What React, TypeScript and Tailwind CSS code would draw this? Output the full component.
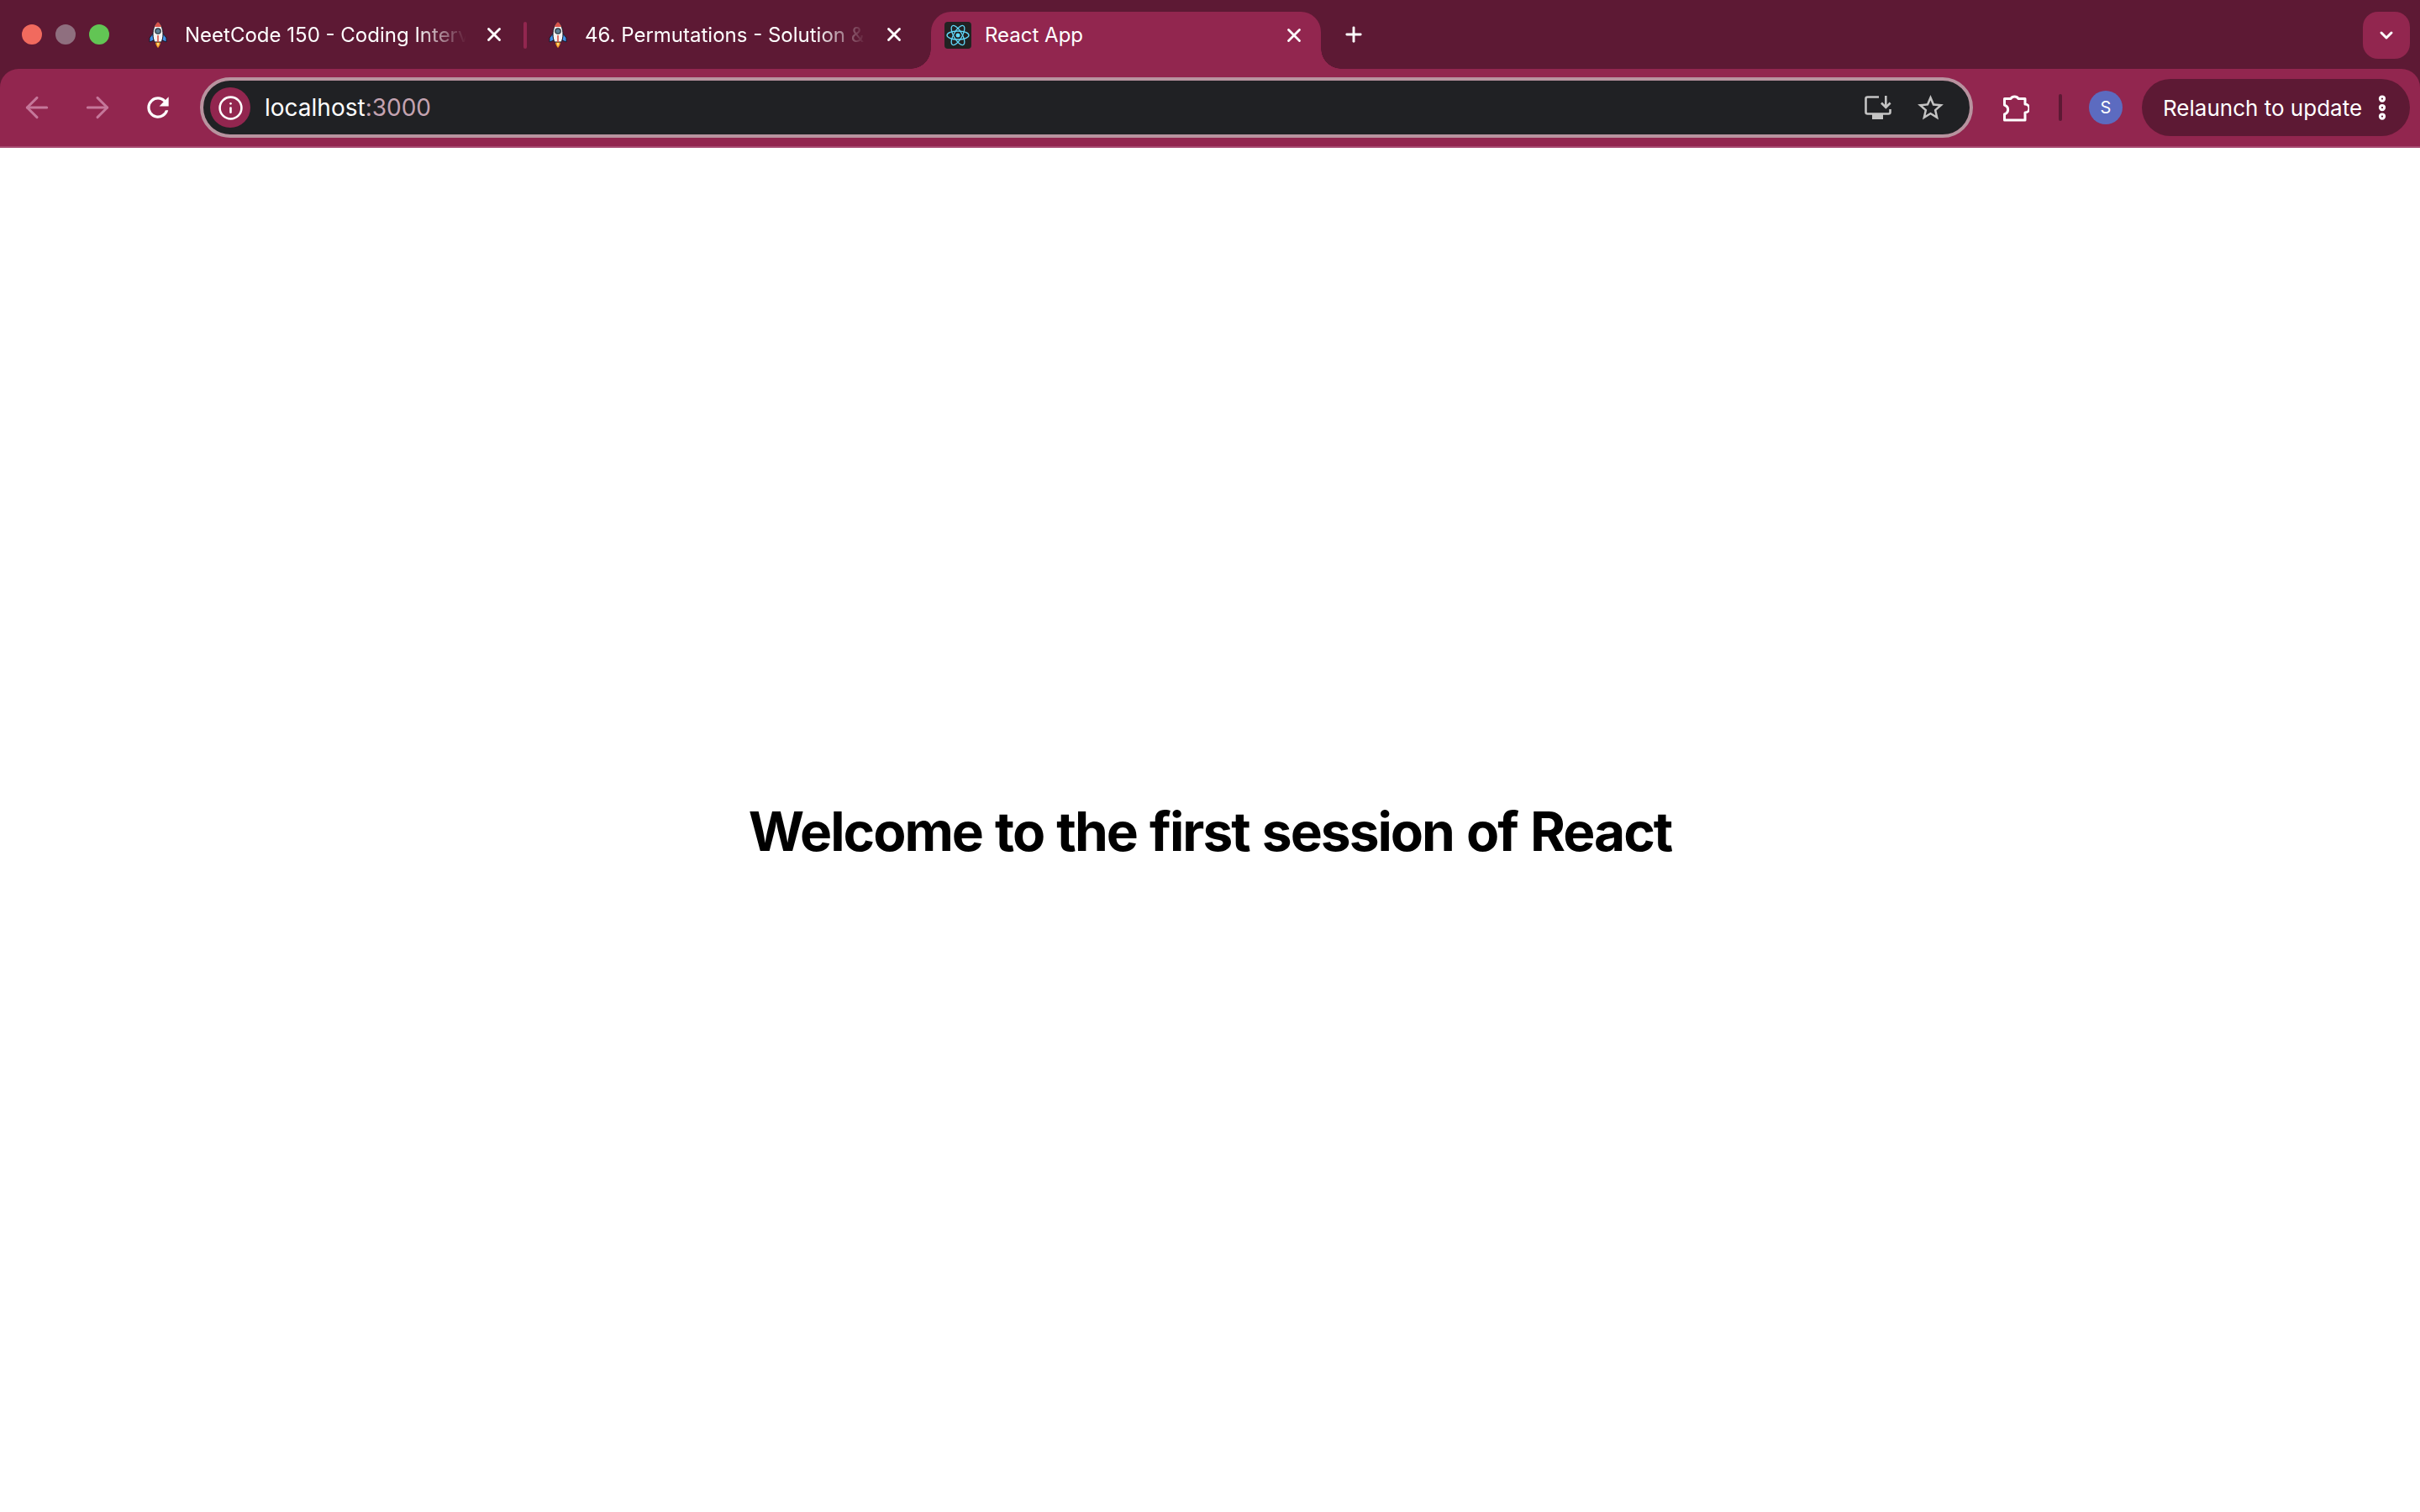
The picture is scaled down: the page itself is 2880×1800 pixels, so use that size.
import { ArrowLeft, ArrowRight, ChevronDown, EllipsisVertical, Info, Plus, X } from "lucide-react";

function RocketIcon() {
  return (
    <svg viewBox="0 0 32 32" className="h-8 w-8 shrink-0">
      <path d="M10 15 L6 20 L6 25 L11 23 Z" fill="#3f8fe8" stroke="#1b1b2a" strokeWidth="1" />
      <path d="M22 15 L26 20 L26 25 L21 23 Z" fill="#3f8fe8" stroke="#1b1b2a" strokeWidth="1" />
      <path d="M13 25 L19 25 C19 28 17 31 16 32 C15 31 13 28 13 25 Z" fill="#f59a23" />
      <path d="M15 26 L17 26 C17 28 16.500 29 16 30 C15.500 29 15 28 15 26 Z" fill="#fde68a" />
      <path d="M16 1 C12 4 10 10 10 16 C10 20 11 23 12 25 L20 25 C21 23 22 20 22 16 C22 10 20 4 16 1 Z" fill="#f4f4f4" stroke="#1b1b2a" strokeWidth="1" />
      <path d="M16 1 C14 2.500 12.800 4.500 11.800 7 L20.200 7 C19.200 4.500 18 2.500 16 1 Z" fill="#d9534a" />
      <circle cx="16" cy="12" r="3.200" fill="#5b7f95" stroke="#26323a" strokeWidth="1.200" />
      <rect x="15.200" y="17" width="1.600" height="8" fill="#d9534a" />
    </svg>
  );
}

function ReactIcon() {
  return (
    <div className="flex h-8 w-8 shrink-0 items-center justify-center rounded-[4px] bg-[#222222]">
      <svg viewBox="-15 -15 30 30" className="h-[30px] w-[30px]" fill="none" stroke="#61dafb" strokeWidth="1.300">
        <ellipse rx="13" ry="5" />
        <ellipse rx="13" ry="5" transform="rotate(60)" />
        <ellipse rx="13" ry="5" transform="rotate(120)" />
        <circle r="2.500" fill="#61dafb" stroke="none" />
      </svg>
    </div>
  );
}

function ReloadIcon() {
  return (
    <svg viewBox="0 0 24 24" className="ml-[33px] h-[38px] w-[38px]" fill="#ffffff">
      <path d="M17.650 6.350A7.950 7.950 0 0 0 12 4a8 8 0 1 0 7.730 10h-2.080A6 6 0 1 1 12 6c1.660 0 3.140.690 4.220 1.780L13 11h7V4l-2.350 2.350z" />
    </svg>
  );
}

function InstallIcon() {
  return (
    <svg viewBox="0 0 32 28" className="h-[28px] w-8" fill="none" stroke="#c4c4c4" strokeWidth="2.600">
      <path d="M17 1.500 H3.500 Q1.500 1.500 1.500 3.500 V19.500 Q1.500 21.500 3.500 21.500 H28.500 Q30.500 21.500 30.500 19.500 V16" />
      <path d="M9 25 H22" strokeWidth="6" />
      <path d="M25.300 0 V14 M20 8.500 L25.300 14 L30.600 8.500" />
    </svg>
  );
}

function StarIcon() {
  return (
    <svg viewBox="0 0 24 24" className="ml-[28px] h-[37px] w-[37px]" fill="#c4c4c4">
      <path d="M22 9.240l-7.190-.620L12 2 9.190 8.630 2 9.240l5.460 4.730L5.820 21 12 17.270 18.180 21l-1.630-7.030L22 9.240zM12 15.400l-3.760 2.270 1-4.280-3.320-2.880 4.380-.380L12 6.100l1.710 4.040 4.380.380-3.320 2.880 1 4.280L12 15.400z" />
    </svg>
  );
}

function ExtensionIcon() {
  return (
    <svg viewBox="0 0 32 33" className="h-[33px] w-8" fill="none" stroke="#ffffff" strokeWidth="3" strokeLinejoin="round">
      <path d="M2.500 5.500 H10 A5 4.500 0 0 1 19 5.500 H27 V12 A5 5 0 0 1 27 22 V31 H2.500 V24 C8 22 8 15 2.500 13 Z" />
    </svg>
  );
}

function InactiveTab({ title, className }: { title: string; className: string }) {
  return (
    <div className={`flex h-[54px] shrink-0 items-center ${className}`}>
      <RocketIcon />
      <span className="ml-[16px] mt-[1px] min-w-0 flex-1 overflow-hidden whitespace-nowrap text-[24px] text-white [mask-image:linear-gradient(to_right,#000_82%,transparent_100%)]">
        {title}
      </span>
      <X className="ml-[20px] h-[26px] w-[26px] shrink-0 text-white" strokeWidth={2.6} />
    </div>
  );
}

export default function App() {
  return (
    <div className="flex min-h-screen flex-col bg-white font-['Inter',sans-serif]">
      {/* tab strip */}
      <div className="flex h-[82px] items-start bg-[#5d1934] pt-[14px]">
        <div className="flex h-[54px] w-[157px] shrink-0 items-center gap-[16px] pl-[26px]">
          <span className="h-[24px] w-[24px] rounded-full bg-[#f16a5e]" />
          <span className="h-[24px] w-[24px] rounded-full bg-[#8f6f7f]" />
          <span className="h-[24px] w-[24px] rounded-full bg-[#62c554]" />
        </div>
        <InactiveTab title="NeetCode 150 - Coding Interview" className="w-[466px] pl-[15px] pr-[22px]" />
        <div className="mt-[12px] h-[32px] w-[4px] shrink-0 rounded-full bg-[#92264f]" />
        <InactiveTab title="46. Permutations - Solution & Explanation" className="w-[481px] pl-[21px] pr-[31px]" />
        <div className="relative flex h-[68px] w-[464px] shrink-0 items-start rounded-t-[24px] bg-[#92264f] pl-[16px] pr-[19px] pt-[12px]">
          <div className="absolute bottom-0 left-[-24px] h-[24px] w-[24px] bg-[radial-gradient(circle_at_0_0,transparent_23.5px,#92264f_24px)]" />
          <div className="absolute bottom-0 right-[-24px] h-[24px] w-[24px] bg-[radial-gradient(circle_at_100%_0,transparent_23.5px,#92264f_24px)]" />
          <ReactIcon />
          <span className="ml-[16px] flex-1 text-[24px] leading-[32px] text-white">React App</span>
          <X className="mt-[3px] h-[26px] w-[26px] text-white" strokeWidth={2.6} />
        </div>
        <div className="flex h-[54px] w-[78px] shrink-0 items-center justify-center">
          <Plus className="h-[28px] w-[28px] text-white" strokeWidth={2.5} />
        </div>
        <div className="flex-1" />
        <div className="mr-[12px] flex h-[56px] w-[56px] items-center justify-center rounded-[18px] bg-[#92264f]">
          <ChevronDown className="h-[24px] w-[24px] text-white" strokeWidth={3} />
        </div>
      </div>

      {/* toolbar */}
      <div className="bg-[#5d1934]">
        <div className="flex h-[94px] items-center rounded-t-[22px] border-b-2 border-[#a64a70] bg-[#92264f] bg-clip-padding pr-[12px]">
          <div className="flex w-[238px] shrink-0 items-center pl-[24px]">
            <ArrowLeft className="h-[40px] w-[40px] text-[#c5779a]" strokeWidth={1.8} />
            <ArrowRight className="ml-[32px] h-[40px] w-[40px] text-[#c5779a]" strokeWidth={1.8} />
            <ReloadIcon />
          </div>
          <div className="flex h-[72px] w-[2110px] shrink-0 items-center rounded-full border-4 border-[#b8939f] bg-[#202124] pl-[8px] pr-[28px]">
            <div className="flex h-[48px] w-[48px] items-center justify-center rounded-full bg-[#92264f]">
              <Info className="h-[31px] w-[31px] text-white" strokeWidth={2} />
            </div>
            <span className="ml-[17px] flex-1 text-[28px] text-white">
              localhost<span className="text-[#c4a3b1]">:3000</span>
            </span>
            <InstallIcon />
            <StarIcon />
          </div>
          <div className="ml-[35px] flex w-[32px] shrink-0 justify-center">
            <ExtensionIcon />
          </div>
          <div className="ml-[35px] h-[32px] w-[4px] shrink-0 rounded-full bg-[#5d1934]" />
          <div className="ml-[32px] flex h-[40px] w-[40px] shrink-0 items-center justify-center rounded-full bg-[#5c6bc0] text-[20px] text-white">
            S
          </div>
          <div className="ml-[23px] flex h-[68px] w-[319px] shrink-0 items-center rounded-full bg-[#5d1934] pl-[25px]">
            <span className="text-[26px] whitespace-nowrap text-white">Relaunch to update</span>
            <EllipsisVertical className="ml-[6px] h-[36px] w-[36px] text-white" strokeWidth={3.5} />
          </div>
        </div>
      </div>

      {/* page */}
      <main className="flex flex-1 items-center justify-center pt-[3px]">
        <h1 className="text-[64px] font-bold tracking-[-2px] [word-spacing:2px] text-black">Welcome to the first session of React</h1>
      </main>
    </div>
  );
}
